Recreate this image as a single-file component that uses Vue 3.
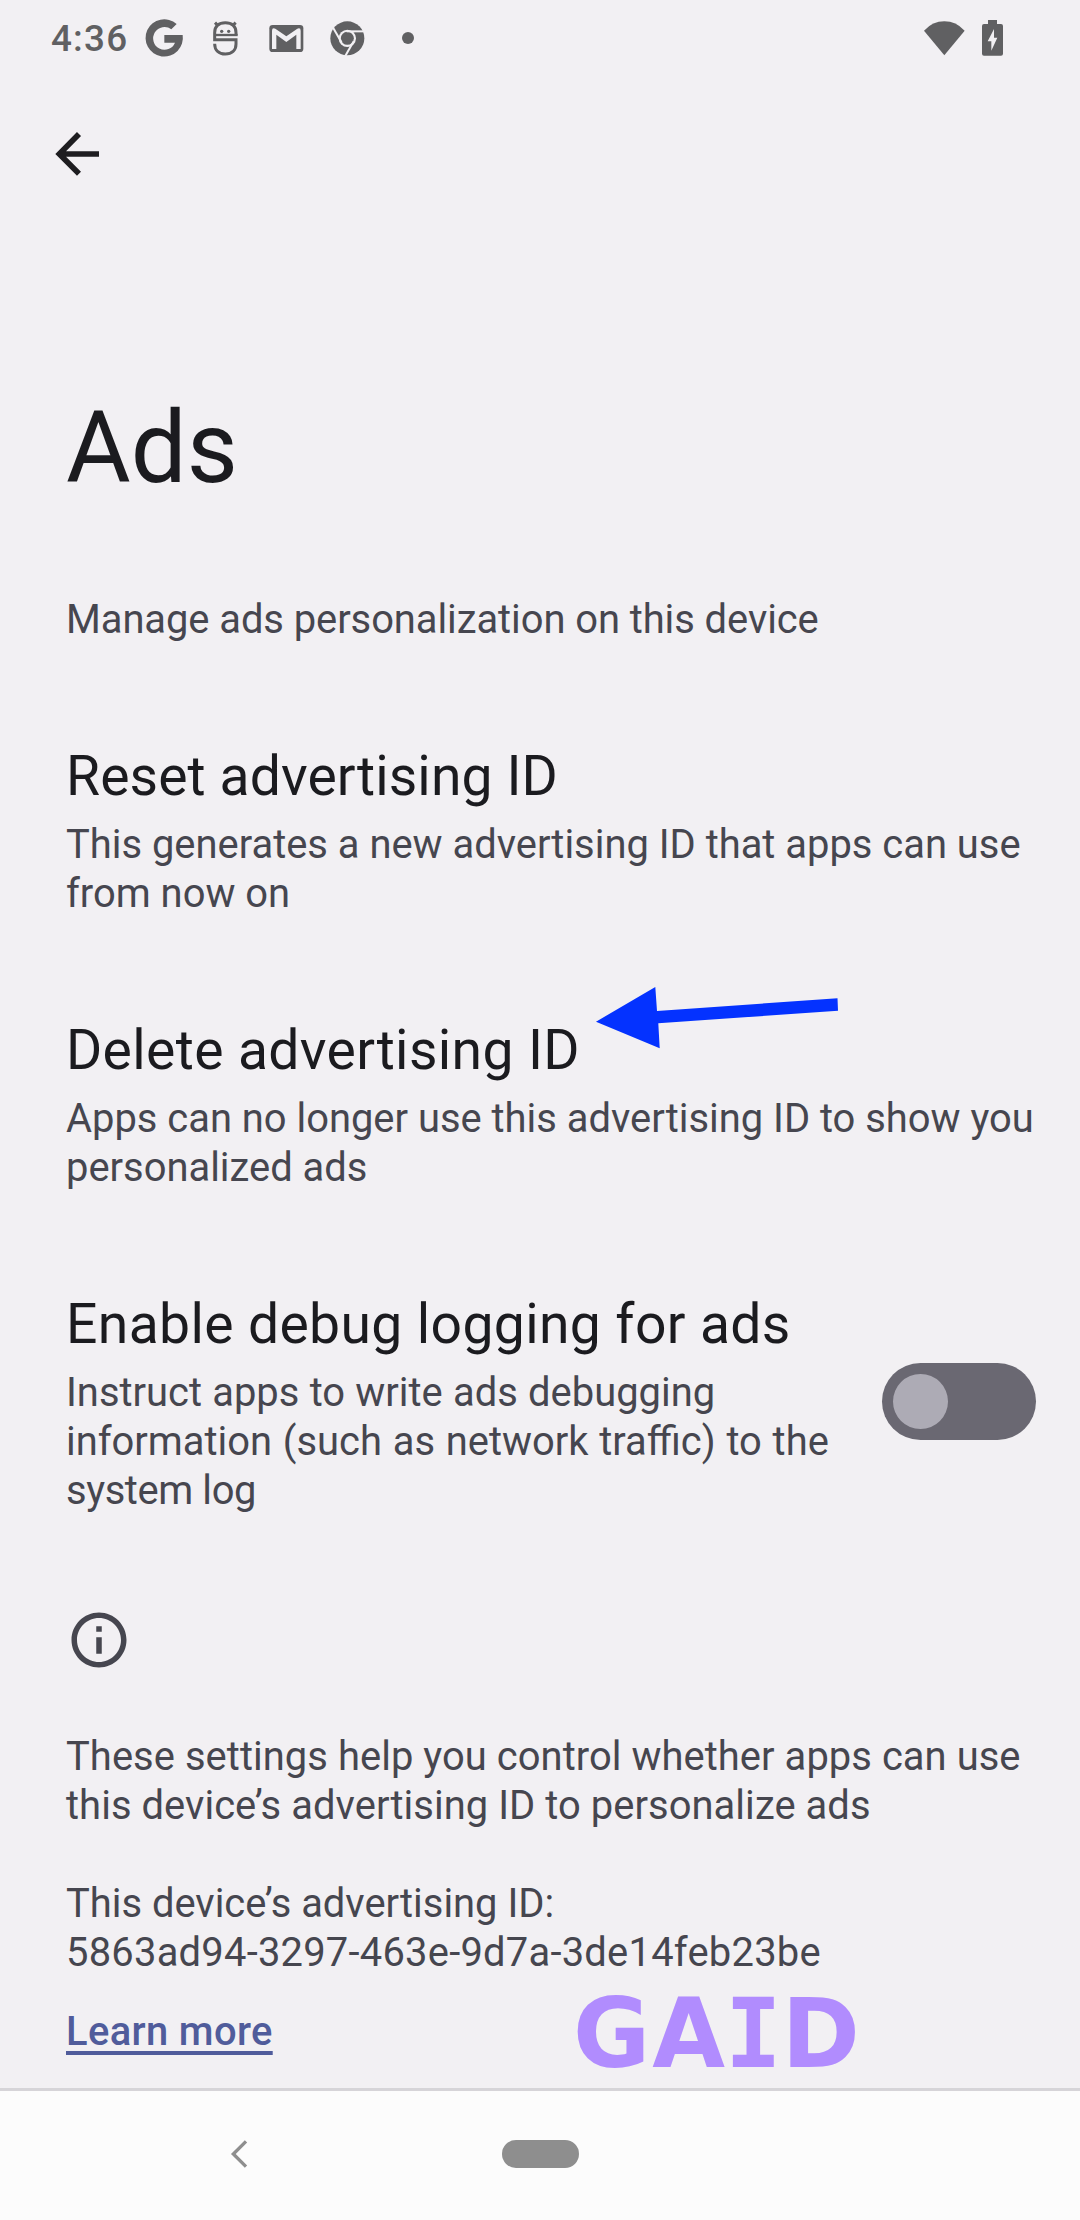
<script setup>
import { ref } from 'vue'

const debugLogging = ref(false)
</script>

<template>
  <div class="screen">
    <header class="status">
      <span class="clock">4:36</span>
      <svg class="status-left" viewBox="315 0 885 240" width="295" height="80">
        <path d="M440 72A56 56 0 1 0 458 105H403V128H435A34 34 0 1 1 424 88Z" />
        <g fill="none" stroke="#606062" stroke-width="9">
          <path d="M618 106V98C618 78 605 68 586 68S554 78 554 98V119H618V132C618 151 605 162 586 162S554 151 554 131" />
          <path d="M554 105H623" stroke-width="7" />
          <path d="M555 68L565 78M617 68L607 78" />
        </g>
        <circle cx="575" cy="94" r="5" />
        <circle cx="596" cy="94" r="5" />
        <rect x="718" y="75" width="102" height="81" rx="10" />
        <path class="cut" d="M726 147V92Q726 82 736 86L769 109L802 86Q812 82 812 92V147H799V104L769 126L739 104V147Z" />
        <circle cx="952" cy="115" r="51" />
        <circle class="cut" cx="952" cy="115" r="26" />
        <circle cx="952" cy="115" r="19.500" />
        <g class="spokes">
          <path d="M950 94H1001" />
          <path d="M950 94H1001" transform="rotate(120 952 115)" />
          <path d="M950 94H1001" transform="rotate(240 952 115)" />
        </g>
        <circle cx="1134" cy="114" r="18" />
      </svg>
      <svg class="status-right" viewBox="120 0 270 240" width="90" height="80">
        <path d="M193 166L132 92Q158 64 193 64T254 92Z" />
        <path d="M324 72V60H351V72H363Q369 72 369 78V161Q369 167 363 167H312Q306 167 306 161V78Q306 72 312 72Z" />
        <path class="cut" d="M342 87L323 124H334V152L352 113H342Z" />
      </svg>
    </header>

    <nav class="toolbar">
      <svg viewBox="60 60 156 144" width="52" height="48" fill="none" stroke="#1e1d20" stroke-width="17">
        <path d="M147 72L88 132L147 191M88 132H207" />
      </svg>
    </nav>

    <main class="content">
      <h1 class="title">Ads</h1>
      <p class="body intro">Manage ads personalization on this device</p>

      <section class="item">
        <h2 class="heading">Reset advertising ID</h2>
        <p class="body">This generates a new advertising ID that apps can use<br>from now on</p>
      </section>

      <section class="item">
        <h2 class="heading wide">Delete advertising ID</h2>
        <p class="body">Apps can no longer use this advertising ID to show you<br>personalized ads</p>
        <svg class="pointer" viewBox="0 0 250 70" width="250" height="70">
          <path d="M6 41.700L65.300 7L67 31L247.500 18.300L248 30.700L68.300 43.300L69.700 68.300Z" fill="#0432ff" />
        </svg>
      </section>

      <section class="item row">
        <div>
          <h2 class="heading wide">Enable debug logging for ads</h2>
          <p class="body"><span class="roomy">Instruct apps to write ads debugging</span><br><span class="spaced">information (such as network traffic) to the</span><br><span class="tight">system log</span></p>
        </div>
        <button class="toggle" :class="{ on: debugLogging }" @click="debugLogging = !debugLogging"><span class="knob"></span></button>
      </section>

      <svg class="info" viewBox="0 0 24 24" width="66" height="66">
        <path d="M11 7h2v2h-2zm0 4h2v6h-2zm1-9C6.480 2 2 6.480 2 12s4.480 10 10 10 10-4.480 10-10S17.520 2 12 2zm0 18c-4.410 0-8-3.590-8-8s3.590-8 8-8 8 3.590 8 8-3.590 8-8 8z" />
      </svg>

      <p class="body note">These settings help you control whether apps can use<br>this device’s advertising ID to personalize ads</p>
      <p class="body device">This device’s advertising ID:<br><span class="gaid">5863ad94-3297-463e-9d7a-3de14feb23be</span></p>
      <a class="learn">Learn more</a>
      <div class="mark">G<span class="a">A</span><span class="i">I</span>D</div>
    </main>

    <footer class="navbar">
      <svg class="back" viewBox="86 205 60 96" width="20" height="32" fill="none" stroke="#8e8e8e" stroke-width="10">
        <path d="M137 215L99 253L137 291" />
      </svg>
      <span class="pill"></span>
    </footer>
  </div>
</template>

<style>
body { margin: 0; background: #f2f0f3; }
</style>

<style scoped>
.screen {
  display: flex;
  flex-direction: column;
  width: 1080px;
  height: 2220px;
  overflow: hidden;
  background: #f2f0f3;
  color: #46464f;
  font-family: Roboto, "Noto Sans", sans-serif;
}
h1, h2, p { margin: 0; font-weight: 400; }
svg { display: block; }
.status { display: flex; height: 80px; padding-left: 51px; fill: #606062; color: #606062; }
.clock { width: 84px; font-size: 36.8px; font-weight: 500; line-height: 78px; letter-spacing: 1.2px; }
.status-right { margin-left: 490px; }
.cut { fill: #f2f0f3; }
.spokes { stroke: #f2f0f3; stroke-width: 6; }
.toolbar { height: 152px; padding: 50px 0 0 50px; box-sizing: border-box; }
.content { position: relative; height: 1856px; padding: 158px 44px 0 66px; box-sizing: border-box; }
.title { font-size: 99.2px; line-height: 117px; color: #1b1b1f; }
.body { font-size: 39.9px; line-height: 49px; white-space: nowrap; }
.intro { margin-top: 88px; letter-spacing: -0.06px; }
.item { position: relative; margin-top: 100px; }
.heading { margin-bottom: 11px; font-size: 55.25px; line-height: 65px; letter-spacing: 0.1px; color: #1b1b1f; white-space: nowrap; }
.heading.wide { letter-spacing: 0.36px; }
.roomy { word-spacing: 0.4px; }
.spaced { word-spacing: 0.9px; }
.tight { letter-spacing: -0.4px; }
.row { display: flex; justify-content: space-between; align-items: center; }
.toggle {
  display: flex;
  align-items: center;
  width: 154px;
  height: 77px;
  margin-bottom: 4px;
  padding: 0 11px;
  border: 0;
  border-radius: 39px;
  background: #6a6872;
}
.toggle.on { justify-content: flex-end; }
.knob { width: 55px; height: 55px; border-radius: 50%; background: #adabb5; }
.pointer { position: absolute; left: 524px; top: -38px; }
.info { margin: 92px 0 59px; fill: #46464f; }
.note { letter-spacing: 0.06px; }
.device { margin-top: 49px; }
.gaid { letter-spacing: 0.24px; }
.learn {
  display: inline-block;
  margin-top: 30px;
  font-size: 39.9px;
  font-weight: 500;
  line-height: 49px;
  letter-spacing: 0.36px;
  color: #505c9b;
  text-decoration: underline 3.5px;
  text-underline-offset: 6px;
  text-decoration-skip-ink: none;
}
.mark {
  position: absolute;
  left: 573px;
  bottom: -4px;
  font: 700 97px/117px "DejaVu Sans", sans-serif;
  white-space: nowrap;
  color: #b18cfe;
  transform: scaleX(0.97);
  transform-origin: left;
}
.mark .a { margin-left: 2px; }
.mark .i { font-family: "DejaVu Sans Mono", monospace; }
.navbar { display: flex; height: 132px; padding-left: 229px; border-top: 3px solid #d6d4d8; box-sizing: border-box; background: #fcfcfc; }
.back { margin-top: 47px; }
.pill { width: 77px; height: 28px; margin: 49px 0 0 253px; border-radius: 14px; background: #8e8e8e; }
</style>
